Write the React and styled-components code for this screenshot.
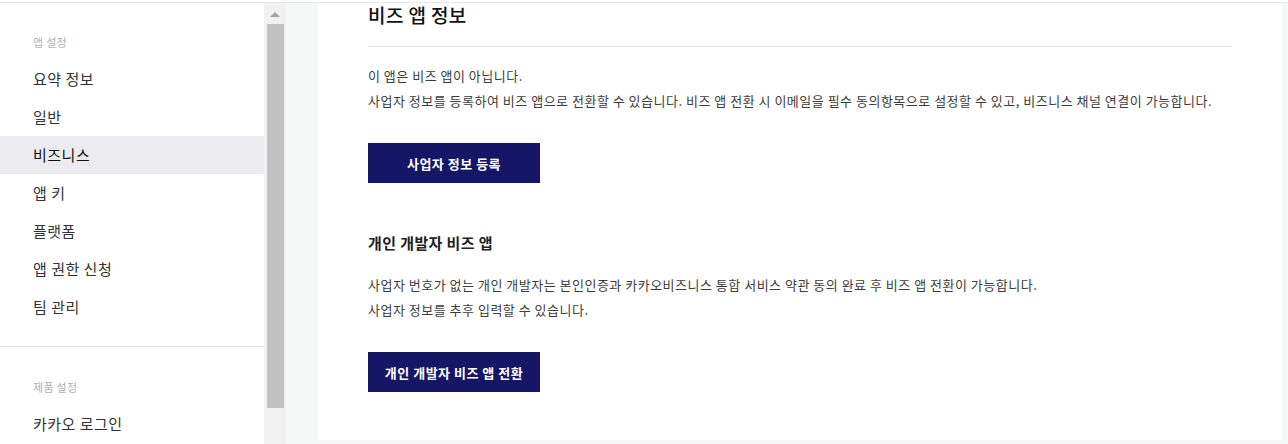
import React from 'react';
import styled, { createGlobalStyle } from 'styled-components';

const GlobalStyle = createGlobalStyle`
    html, body {
        margin: 0;
        padding: 0;
        height: 444px;
        overflow: hidden;
        background: #fff;
        font-family: "Noto Sans CJK KR", "Noto Sans", sans-serif;
    }
    * { box-sizing: border-box; }
`;

const Page = styled.div`
    display: flex;
    flex-direction: column;
    height: 444px;
`;

const TopBar = styled.div`
    height: 3px;
    flex-shrink: 0;
    border-bottom: 1px solid #e8e8e8;
    background: #fff;
`;

const Body = styled.div`
    display: flex;
    flex: 1;
    min-height: 0;
`;

const Sidebar = styled.nav`
    width: 264px;
    flex-shrink: 0;
    background: #fff;
    overflow: hidden;
`;

const Section = styled.div`
    padding: ${p => (p.$first ? '29px' : '30px')} 0 20px;
    border-bottom: ${p => (p.$divider ? '1px solid #e6e6e6' : 'none')};
`;

const SectionLabel = styled.div`
    padding-left: 33px;
    height: 20px;
    line-height: 20px;
    font-size: 11px;
    letter-spacing: 0.3px;
    color: #b0b0b0;
    margin-bottom: 8px;
`;

const NavItem = styled.div`
    height: 38px;
    line-height: 38px;
    padding-left: 33px;
    font-size: 15px;
    letter-spacing: 0.5px;
    color: ${p => (p.$active ? '#111' : '#333')};
    background: ${p => (p.$active ? '#ececf0' : 'transparent')};
`;

const ScrollTrack = styled.div`
    width: 22px;
    flex-shrink: 0;
    background: #f1f1f1;
    display: flex;
    flex-direction: column;
    align-items: center;
    padding-top: 9px;
`;

const ScrollArrow = styled.div`
    width: 0;
    height: 0;
    border-left: 5px solid transparent;
    border-right: 5px solid transparent;
    border-bottom: 5px solid #a3a3a3;
    margin-bottom: 7px;
`;

const ScrollThumb = styled.div`
    width: 17px;
    height: 384px;
    background: #c1c1c1;
`;

const Main = styled.main`
    flex: 1;
    background: #f6f7f7;
    padding: 0 6px 0 32px;
    display: flex;
    align-items: flex-start;
`;

const Card = styled.section`
    flex: 1;
    background: #fff;
    padding: 0 50px 48px;
`;

const Heading = styled.h2`
    margin: 0;
    font-size: 19px;
    font-weight: 500;
    letter-spacing: 0.4px;
    line-height: 24px;
    color: #111;
    padding-bottom: 19px;
    border-bottom: 1px solid #e5e5e5;
`;

const SubHeading = styled.h3`
    margin: 49px 0 0;
    font-size: 15px;
    font-weight: 700;
    letter-spacing: 0.4px;
    line-height: 22px;
    color: #222;
`;

const Desc = styled.p`
    margin: ${p => p.$top || '16px'} 0 0;
    font-size: 13px;
    letter-spacing: 0.5px;
    line-height: 25px;
    color: #3c3c3c;
`;

const PrimaryButton = styled.button`
    display: block;
    width: 172px;
    height: 40px;
    margin-top: 30px;
    border: none;
    background: #161667;
    color: #fff;
    font-family: inherit;
    font-size: 13px;
    font-weight: 700;
    letter-spacing: 0.5px;
    cursor: pointer;
`;

const appMenu = ['요약 정보', '일반', '비즈니스', '앱 키', '플랫폼', '앱 권한 신청', '팀 관리'];

export default function App() {
    return (
        <Page>
            <GlobalStyle />
            <TopBar />
            <Body>
                <Sidebar>
                    <Section $first $divider>
                        <SectionLabel>앱 설정</SectionLabel>
                        {appMenu.map(item => (
                            <NavItem key={item} $active={item === '비즈니스'}>{item}</NavItem>
                        ))}
                    </Section>
                    <Section>
                        <SectionLabel>제품 설정</SectionLabel>
                        <NavItem>카카오 로그인</NavItem>
                    </Section>
                </Sidebar>
                <ScrollTrack>
                    <ScrollArrow />
                    <ScrollThumb />
                </ScrollTrack>
                <Main>
                    <Card>
                        <Heading>비즈 앱 정보</Heading>
                        <Desc>
                            이 앱은 비즈 앱이 아닙니다.<br />
                            사업자 정보를 등록하여 비즈 앱으로 전환할 수 있습니다. 비즈 앱 전환 시 이메일을 필수 동의항목으로 설정할 수 있고, 비즈니스 채널 연결이 가능합니다.
                        </Desc>
                        <PrimaryButton>사업자 정보 등록</PrimaryButton>
                        <SubHeading>개인 개발자 비즈 앱</SubHeading>
                        <Desc $top="18px">
                            사업자 번호가 없는 개인 개발자는 본인인증과 카카오비즈니스 통합 서비스 약관 동의 완료 후 비즈 앱 전환이 가능합니다.<br />
                            사업자 정보를 추후 입력할 수 있습니다.
                        </Desc>
                        <PrimaryButton>개인 개발자 비즈 앱 전환</PrimaryButton>
                    </Card>
                </Main>
            </Body>
        </Page>
    );
}
